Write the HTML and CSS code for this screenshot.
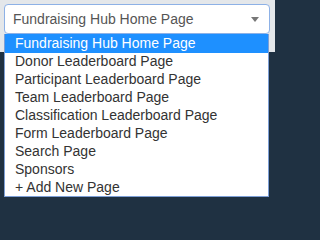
FILE: index.html
```html
<!DOCTYPE html>
<html>
<head>
<meta charset="utf-8">
<link rel="stylesheet" href="styles.css">
</head>
<body>
<div class="page">
  <div class="header">
    <div class="picker">
      <div class="select">
        <span class="value">Fundraising Hub Home Page</span>
        <svg class="arrow" width="8" height="5" viewBox="0 0 8 5"><path d="M0 0H8L4 5Z" fill="#777"/></svg>
      </div>
      <ul class="list">
        <li class="item active">Fundraising Hub Home Page</li>
        <li class="item">Donor Leaderboard Page</li>
        <li class="item">Participant Leaderboard Page</li>
        <li class="item">Team Leaderboard Page</li>
        <li class="item">Classification Leaderboard Page</li>
        <li class="item">Form Leaderboard Page</li>
        <li class="item">Search Page</li>
        <li class="item">Sponsors</li>
        <li class="item">+ Add New Page</li>
      </ul>
    </div>
  </div>
  <div class="body"></div>
</div>
</body>
</html>
```
FILE: styles.css
```css
html {
  background: #1f3142;
}
html, body {
  margin: 0;
  padding: 0;
}
body {
  font-family: "Liberation Sans", Arial, sans-serif;
  font-size: 14px;
  background: #1f3142;
}
.page {
  display: flex;
  flex-direction: column;
  width: 275px;
  height: 204px;
  overflow: hidden;
}
.header {
  height: 52px;
  background: #e4e7ea;
  padding: 4px 5px 0 4px;
  box-sizing: border-box;
}
.body {
  flex: 1;
  background: #1f3142;
}
.picker {
  position: relative;
}
.select {
  height: 30px;
  box-sizing: border-box;
  border: 1px solid #8db1e6;
  border-radius: 4px;
  background: #fff;
  display: flex;
  align-items: center;
  justify-content: space-between;
  padding: 0 10px 0 8px;
  color: #555;
}
.value {
  line-height: 18px;
}
.arrow {
  display: block;
}
.list {
  position: absolute;
  top: 30px;
  left: 0;
  width: 265px;
  margin: 0;
  padding: 0;
  list-style: none;
  background: #fff;
  border: 1px solid #7d9fd6;
  border-top: none;
  box-sizing: border-box;
}
.item {
  height: 18px;
  line-height: 18px;
  padding-left: 10px;
  color: #333;
  white-space: nowrap;
}
.item.active {
  background: #1e90ff;
  color: #fff;
  height: 19px;
  margin-bottom: -1px;
}
```
